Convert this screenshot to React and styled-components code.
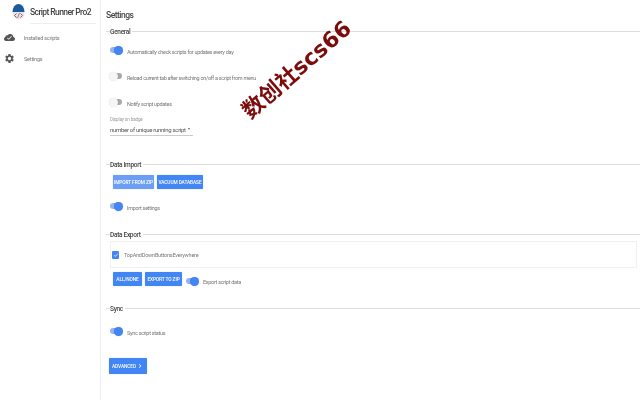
import React from "react";
import styled, { createGlobalStyle } from "styled-components";
import { IoIosCloudDone } from "react-icons/io";
import { MdSettings, MdCheck, MdChevronRight } from "react-icons/md";

const GlobalStyle = createGlobalStyle`
  html, body {
    margin: 0;
    padding: 0;
    background: #fff;
    font-family: Roboto, "Liberation Sans", sans-serif;
  }
`;

const Page = styled.div`
  position: relative;
  display: flex;
  width: 640px;
  height: 400px;
  overflow: hidden;
  color: #555;
  filter: blur(0.3px);
`;

const Sidebar = styled.aside`
  width: 100px;
  flex-shrink: 0;
  border-right: 1px solid #eee;
`;

const Brand = styled.div`
  display: flex;
  align-items: center;
  gap: 5px;
  height: 24px;
  margin-right: 4px;
  padding-left: 12px;
  svg {
    flex-shrink: 0;
  }
`;

const BrandName = styled.div`
  flex: 1;
  height: 23px;
  font-size: 8.5px;
  font-weight: 500;
  line-height: 24px;
  letter-spacing: -0.6px;
  color: #444;
  white-space: nowrap;
  border-bottom: 1px solid #eee;
`;

const Nav = styled.nav`
  display: flex;
  flex-direction: column;
  gap: 6px;
  padding-top: 6px;
`;

const NavItem = styled.div`
  display: flex;
  align-items: center;
  gap: 9px;
  height: 15px;
  padding-left: 4px;
  font-size: 5.5px;
  letter-spacing: -0.2px;
  color: #777;
  svg {
    color: #555;
    flex-shrink: 0;
  }
`;

const Main = styled.main`
  flex: 1;
  padding-left: 5px;
`;

const Title = styled.h1`
  margin: 0;
  padding-top: 10px;
  height: 15px;
  line-height: 11px;
  font-size: 8.5px;
  font-weight: 500;
  letter-spacing: -0.5px;
  color: #444;
`;

const Section = styled.section`
  margin-top: ${(p) => p.$top}px;
`;

const Legend = styled.div`
  display: flex;
  align-items: center;
  height: 9px;
  font-size: 6.5px;
  font-weight: 500;
  letter-spacing: -0.3px;
  color: #444;
  &::before {
    content: "";
    width: 4px;
    height: 1px;
    background: #ddd;
  }
  &::after {
    content: "";
    flex: 1;
    height: 1px;
    margin-left: 2px;
    background: #ddd;
  }
`;

const ToggleRow = styled.div`
  display: flex;
  align-items: center;
  gap: 5px;
  height: 12px;
  margin: ${(p) => p.$top || 0}px 0 0 4px;
  font-size: 5.5px;
  letter-spacing: -0.3px;
  color: #777;
`;

const Track = styled.span`
  position: relative;
  display: inline-block;
  flex-shrink: 0;
  width: 12px;
  height: 6px;
  margin-bottom: 4px;
  border-radius: 3px;
  background: ${(p) => (p.$on ? "#93b6f0" : "#a8a8a8")};
`;

const Thumb = styled.span`
  position: absolute;
  top: -1.5px;
  left: ${(p) => (p.$on ? "4px" : "-1px")};
  width: 9px;
  height: 9px;
  border-radius: 50%;
  background: ${(p) => (p.$on ? "#4285f4" : "#f6f6f6")};
  box-shadow: 0 0 1px rgba(0, 0, 0, ${(p) => (p.$on ? 0.35 : 0.2)});
`;

const SelectLabel = styled.div`
  margin: 7px 0 0 4px;
  font-size: 4.5px;
  line-height: 6px;
  letter-spacing: -0.1px;
  color: #999;
`;

const Select = styled.div`
  display: flex;
  align-items: center;
  gap: 2px;
  width: 83px;
  height: 12px;
  margin-left: 4px;
  font-size: 6px;
  letter-spacing: -0.3px;
  white-space: nowrap;
  color: #555;
  border-bottom: 1px solid #ccc;
  &::after {
    content: "";
    border: 1.5px solid transparent;
    border-top: 2px solid #666;
    border-bottom: 0;
  }
`;

const ButtonRow = styled.div`
  display: flex;
  align-items: center;
  gap: 3px;
  margin: ${(p) => p.$top}px 0 0 ${(p) => p.$left}px;
`;

const Button = styled.button`
  display: flex;
  align-items: center;
  justify-content: center;
  height: ${(p) => p.$height || 14}px;
  width: ${(p) => p.$width}px;
  padding: 0;
  border: 0;
  border-radius: 1px;
  background: ${(p) => p.$bg || "#4285f4"};
  color: #fff;
  font-family: inherit;
  font-size: 4.8px;
  font-weight: 500;
  letter-spacing: -0.1px;
  white-space: nowrap;
  box-shadow: 0 0 1px rgba(66, 133, 244, 0.6);
`;

const ScriptList = styled.div`
  display: flex;
  align-items: center;
  gap: 5px;
  height: 25px;
  margin: 2px 3px 0 4px;
  padding-left: 1px;
  border: 1px solid #f0f0f0;
  font-size: 5.5px;
  letter-spacing: -0.2px;
  color: #777;
`;

const Checkbox = styled.span`
  display: flex;
  align-items: center;
  justify-content: center;
  flex-shrink: 0;
  width: 7px;
  height: 8px;
  border-radius: 1px;
  background: #4285f4;
  color: #fff;
`;

const ExportToggle = styled.span`
  display: flex;
  height: 6px;
  margin: 4px 0 0 1px;
`;

const ExportLabel = styled.span`
  margin-left: 2px;
  padding-top: 6px;
  font-size: 5.5px;
  letter-spacing: -0.3px;
  color: #777;
`;

const Watermark = styled.div`
  position: absolute;
  left: 229px;
  top: 57px;
  font-family: "DejaVu Sans", "Noto Sans CJK SC", sans-serif;
  font-size: 22px;
  font-weight: 700;
  line-height: 26px;
  color: #7c0b0b;
  white-space: nowrap;
  transform: rotate(-41deg);
`;

const Toggle = ({ on }) => (
  <Track $on={on}>
    <Thumb $on={on} />
  </Track>
);

export default function App() {
  return (
    <Page>
      <GlobalStyle />
      <Sidebar>
        <Brand>
          <svg width="13" height="18" viewBox="0 0 13 18">
            <circle cx="6.5" cy="10.5" r="6" fill="#dce8f2" />
            <path d="M.5 9A6 8 0 0 1 12.5 9Z" fill="#1d5a9c" />
            <path d="M4.5 10.5l-2 2 2 2M8.5 10.5l2 2-2 2" fill="none" stroke="#c9503c" strokeWidth="1" />
            <path d="M7.5 10l-2 5" fill="none" stroke="#c9503c" strokeWidth="0.8" />
          </svg>
          <BrandName>Script Runner Pro2</BrandName>
        </Brand>
        <Nav>
          <NavItem>
            <IoIosCloudDone size={11} />
            Installed scripts
          </NavItem>
          <NavItem>
            <MdSettings size={11} />
            Settings
          </NavItem>
        </Nav>
      </Sidebar>
      <Main>
        <Title>Settings</Title>
        <Section $top={2}>
          <Legend>General</Legend>
          <ToggleRow $top={10}>
            <Toggle on />
            Automatically check scripts for updates every day
          </ToggleRow>
          <ToggleRow $top={14}>
            <Toggle />
            Reload current tab after switching on/off a script from menu
          </ToggleRow>
          <ToggleRow $top={14}>
            <Toggle />
            Notify script updates
          </ToggleRow>
          <SelectLabel>Display on badge</SelectLabel>
          <Select>number of unique running script</Select>
        </Section>
        <Section $top={24}>
          <Legend>Data Import</Legend>
          <ButtonRow $top={6} $left={7}>
            <Button $width={41} $bg="#6d9ef5">IMPORT FROM ZIP</Button>
            <Button $width={46}>VACUUM DATABASE</Button>
          </ButtonRow>
          <ToggleRow $top={13}>
            <Toggle on />
            Import settings
          </ToggleRow>
        </Section>
        <Section $top={16}>
          <Legend>Data Export</Legend>
          <ScriptList>
            <Checkbox>
              <MdCheck size={6} />
            </Checkbox>
            TopAndDownButtonsEverywhere
          </ScriptList>
          <ButtonRow $top={4} $left={7}>
            <Button $width={29}>ALL/NONE</Button>
            <Button $width={37}>EXPORT TO ZIP</Button>
            <ExportToggle>
              <Toggle on />
            </ExportToggle>
            <ExportLabel>Export script data</ExportLabel>
          </ButtonRow>
        </Section>
        <Section $top={18}>
          <Legend>Sync</Legend>
          <ToggleRow $top={14}>
            <Toggle on />
            Sync script status
          </ToggleRow>
        </Section>
        <ButtonRow $top={19} $left={3}>
          <Button $width={38} $height={16}>
            ADVANCED <MdChevronRight size={8} />
          </Button>
        </ButtonRow>
      </Main>
      <Watermark>数创社scs66</Watermark>
    </Page>
  );
}
